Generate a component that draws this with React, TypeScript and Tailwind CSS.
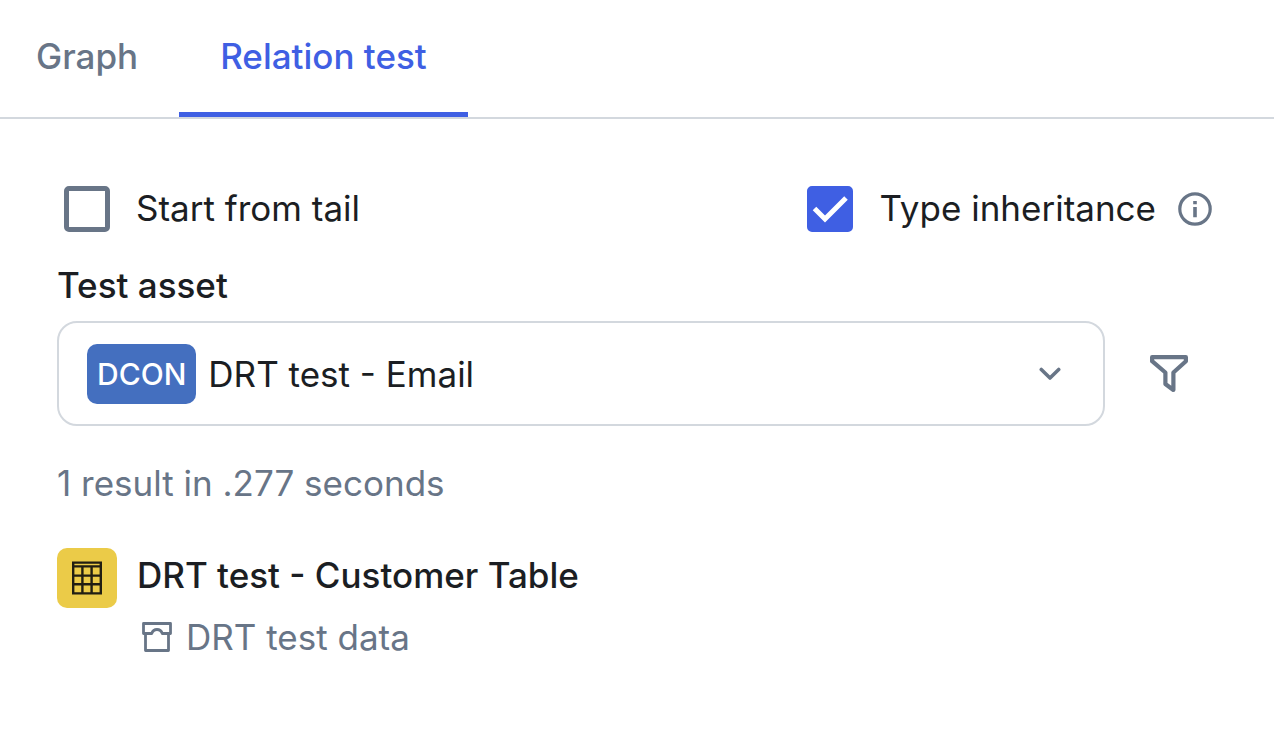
import { useId, useState } from "react";
import type { ReactNode } from "react";

type Tab = "graph" | "relation";

const TABS: { id: Tab; label: string }[] = [
  { id: "graph", label: "Graph" },
  { id: "relation", label: "Relation test" },
];

// Icons

function CheckIcon() {
  return (
    <svg viewBox="0 0 46 46" fill="none" stroke="currentColor" strokeWidth="5" className="pointer-events-none absolute inset-0 size-full text-white" aria-hidden>
      <path d="M7.5 22.5 18 33 39 12" />
    </svg>
  );
}

function InfoIcon() {
  return (
    <svg viewBox="0 0 34 34" fill="none" className="size-[34px]" aria-hidden>
      <circle cx="17" cy="17" r="15.2" stroke="currentColor" strokeWidth="3.2" />
      <path d="M15.2 9h3.6v3.2h-3.6zM15.2 15h3.6v10.3h-3.6z" fill="currentColor" />
    </svg>
  );
}

function ChevronIcon() {
  return (
    <svg viewBox="0 0 22 14" fill="none" stroke="currentColor" strokeWidth="3.6" strokeLinecap="round" strokeLinejoin="round" className="pointer-events-none h-[14px] w-[22px]" aria-hidden>
      <path d="M2.3 2.5 11 11l8.7-8.5" />
    </svg>
  );
}

function FilterIcon() {
  return (
    <svg viewBox="0 0 40 40" fill="none" stroke="currentColor" strokeWidth="4.2" strokeLinejoin="round" className="size-10" aria-hidden>
      <path d="M3.1 3.2h33.8v4L24.4 18.500V36L16.400 30V18.500L3.100 7.200z" />
    </svg>
  );
}

function TableIcon() {
  return (
    <svg viewBox="0 0 30 34" fill="none" stroke="currentColor" strokeWidth="2.4" className="h-[34px] w-[30px]" aria-hidden>
      <path d="M1.2 1.600h27.600v30.800H1.200zM1.200 5.400h27.600M1.200 14.600h27.600M1.200 23.200h27.600M10.400 5v27M19.600 5v27" />
    </svg>
  );
}

function DomainIcon() {
  return (
    <svg viewBox="0 0 30 30" fill="none" stroke="currentColor" strokeWidth="2.8" strokeLinejoin="round" className="size-[30px]" aria-hidden>
      <path d="M1.500 1.500h27v10h-8.200c-.8-2.300-2.800-4-5.300-4s-4.500 1.700-5.300 4H1.500zM3.500 11.500v17h23v-17" />
    </svg>
  );
}

// Controls

function Checkbox({
  checked,
  onChange,
  children,
}: {
  checked: boolean;
  onChange: (value: boolean) => void;
  children: ReactNode;
}) {
  return (
    <label className="flex cursor-pointer items-center gap-[26px]">
      <span className="relative size-[46px] shrink-0">
        <input
          type="checkbox"
          checked={checked}
          onChange={(e) => onChange(e.target.checked)}
          className="block size-[46px] appearance-none rounded-[5px] border-[5px] border-[#687587] bg-white checked:border-[#3f5fe3] checked:bg-[#3f5fe3]"
        />
        {checked && <CheckIcon />}
      </span>
      <span className="pb-0.5">{children}</span>
    </label>
  );
}

export default function App() {
  const [tab, setTab] = useState<Tab>("relation");
  const [fromTail, setFromTail] = useState(false);
  const [inheritance, setInheritance] = useState(true);
  const assetId = useId();

  return (
    <main className="min-h-screen bg-white font-['Inter',sans-serif] text-[35px] leading-[42px] text-[#1b1e23]">
      <div role="tablist" className="flex border-b-2 border-[#d3d8de] pr-10">
        {TABS.map((t) => (
          <button
            key={t.id}
            type="button"
            role="tab"
            aria-selected={tab === t.id}
            onClick={() => setTab(t.id)}
            className={`border-b-[5px] px-[41px] py-[35px] font-medium first:pl-9 ${
              tab === t.id
                ? "border-[#3f5fe3] text-[#3f5fe3]"
                : "border-transparent text-[#687587]"
            }`}
          >
            {t.label}
          </button>
        ))}
      </div>

      <div role="tabpanel" className="px-[57px] pt-[67px]">
        <div className="flex items-center justify-between pr-[5px] pl-[7px]">
          <Checkbox checked={fromTail} onChange={setFromTail}>
            Start from tail
          </Checkbox>
          <div className="flex items-center gap-[22px]">
            <Checkbox checked={inheritance} onChange={setInheritance}>
              Type inheritance
            </Checkbox>
            <button type="button" aria-label="About type inheritance" className="text-[#687587]">
              <InfoIcon />
            </button>
          </div>
        </div>

        <label htmlFor={assetId} className="mt-8 block font-medium">
          Test asset
        </label>
        <div className="mt-[15px] flex items-center gap-4">
          <div className="flex h-[105px] min-w-0 flex-1 items-center rounded-[20px] border-2 border-[#d3d8de] pr-[42px] pl-7">
            <span className="flex h-[60px] shrink-0 items-center rounded-[10px] bg-[#446fbf] px-[10px] text-[30px] font-medium text-white">
              DCON
            </span>
            <select id={assetId} className="h-full min-w-0 flex-1 appearance-none bg-transparent pl-[12px] outline-none">
              <option>DRT test - Email</option>
            </select>
            <span className="text-[#687587]">
              <ChevronIcon />
            </span>
          </div>
          <button type="button" aria-label="Filter" className="flex h-[105px] w-24 items-center justify-center text-[#687587]">
            <FilterIcon />
          </button>
        </div>

        <p className="mt-9 text-[#687587]">1 result in .277 seconds</p>

        <div className="mt-11 flex gap-5">
          <span className="flex size-[60px] shrink-0 items-center justify-center rounded-[10px] bg-[#ebcb48] text-[#211e12]">
            <TableIcon />
          </span>
          <div className="pt-[6px]">
            <a href="#customer-table" className="block font-medium">
              DRT test - Customer Table
            </a>
            <p className="mt-5 flex items-center gap-[14px] pl-[5px] text-[#687587]">
              <DomainIcon />
              DRT test data
            </p>
          </div>
        </div>
      </div>
    </main>
  );
}
